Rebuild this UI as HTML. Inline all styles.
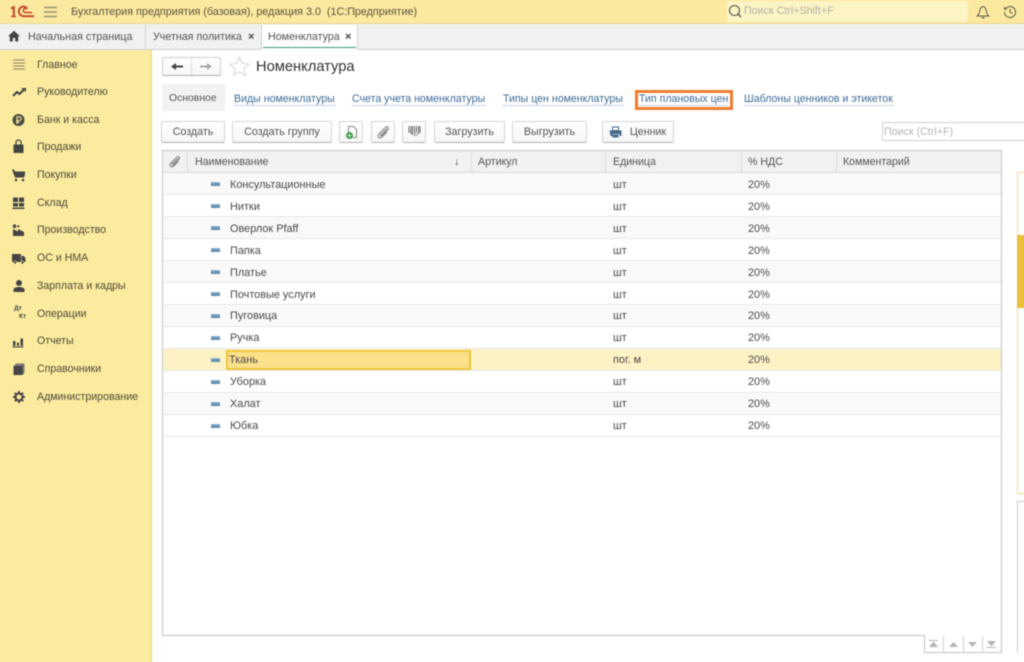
<!DOCTYPE html>
<html lang="ru"><head><meta charset="utf-8"><title>Номенклатура</title>
<style>
*{box-sizing:border-box}
html,body{margin:0;padding:0;width:1024px;height:662px;overflow:hidden;background:#fff}
body{font-family:"Liberation Sans",Arial,sans-serif;font-size:10.7px;color:#4a4a4a;position:relative}
.t{position:absolute;white-space:nowrap;line-height:14px}
#wrap{position:absolute;left:0;top:0;width:1024px;height:662px;filter:blur(.4px)}
.btn{position:absolute;top:121px;height:22px;background:linear-gradient(#fff,#f6f6f6);border:1px solid #d6d6d6;border-bottom-color:#b5b5b5;border-radius:2px;text-align:center;line-height:21px;color:#555;white-space:nowrap}
.link{position:absolute;top:93px;line-height:12px;color:#3f6c99;white-space:nowrap;border-bottom:1px dotted #8fabc7;height:13px}
.m{position:absolute;left:37px;color:#4d4a3a;line-height:14px;white-space:nowrap;font-size:10.6px}
.ic{position:absolute;left:10px;width:16px;height:16px}
.row{position:absolute;left:163px;width:838px;height:22px;border-bottom:1px solid #e8e8e8}
.row.g{background:#f9f9f8}
.row .c{position:absolute;top:5px;line-height:14px;white-space:nowrap;color:#4a4a4a;font-size:10.9px}
.row .d{position:absolute;left:48px;top:9px;width:9px;height:4px;background:#6d97b8;border-top:1px solid #8fb2cc;border-bottom:1px solid #5d86a8}
.hd{position:absolute;top:152px;height:21px;line-height:20px;color:#555;white-space:nowrap;font-size:10.6px}
.sep{position:absolute;top:152px;width:1px;height:21px;background:#dcdcdc}
</style></head><body><div id="wrap">

<!-- top bar -->
<div style="position:absolute;left:-6px;top:-6px;width:1036px;height:30px;background:#fbe99f;border-bottom:1px solid #e8d68c"></div>
<svg style="position:absolute;left:10px;top:5px" width="25" height="14" viewBox="0 0 25 14"><g fill="none" stroke="#c5432b"><path d="M1 3.500 3.800 2.200V11.500" stroke-width="2"/><path d="M1 11.500H6" stroke-width="1.400"/><path d="M17 2.800C15.500 1.500 13 1.200 11.200 2.200 8.800 3.500 8.200 6.500 9.300 8.600c.9 1.800 2.900 2.600 4.900 2.600H24" stroke-width="1.900"/><path d="M22 7.500H15.500c-1.300 0-2.200-.8-2.200-2 0-1.300 1-2.100 2.400-2 .7 0 1.200.2 1.600.6" stroke-width="1.500"/></g></svg>
<svg style="position:absolute;left:44px;top:6px" width="13" height="12" viewBox="0 0 13 12"><path d="M0 1.500h13M0 6h13M0 10.500h13" stroke="#9a9276" stroke-width="1.400"/></svg>
<div class="t" style="left:71px;top:5px;color:#5a553f;font-size:10.75px">Бухгалтерия предприятия (базовая), редакция 3.0&nbsp; (1С:Предприятие)</div>
<div style="position:absolute;left:727px;top:1px;width:241px;height:21px;background:#fdf4c6;border-radius:2px"></div>
<svg style="position:absolute;left:728px;top:4px" width="15" height="15" viewBox="0 0 15 15"><circle cx="6.500" cy="6.500" r="5" fill="none" stroke="#555" stroke-width="1.100"/><path d="M10 10l3 3" stroke="#555" stroke-width="1.400"/></svg>
<div class="t" style="left:744px;top:4px;color:#b4b0a0">Поиск Ctrl+Shift+F</div>
<svg style="position:absolute;left:976px;top:5px" width="14" height="14" viewBox="0 0 14 14"><path d="M7 1.500C4.800 2 4 3.500 3.800 6c-.2 2.500-1.700 4-2.500 5h11.400c-.8-1-2.300-2.500-2.500-5C10 3.500 9.200 2 7 1.500z" fill="none" stroke="#5a5a50" stroke-width="1"/><path d="M5.500 12.800h3" stroke="#5a5a50" stroke-width="1.200"/></svg>
<svg style="position:absolute;left:1003px;top:5px" width="14" height="14" viewBox="0 0 14 14"><path d="M2.400 4A5.500 5.500 0 1 1 1.500 7" fill="none" stroke="#5a5a50" stroke-width="1"/><path d="M.8 1.800l.6 3.200 3-.8z" fill="#5a5a50"/><path d="M7 3.800V7l2.300 1.600" fill="none" stroke="#5a5a50" stroke-width="1"/></svg>

<!-- tabs -->
<div style="position:absolute;left:-6px;top:24px;width:1036px;height:26px;background:#f1f1f1;border-bottom:1px solid #cfcfcf"></div>
<svg style="position:absolute;left:8px;top:30px" width="12" height="12" viewBox="0 0 12 12"><path d="M6 .8 0 6.300h1.800V11.500h3V8h2.400v3.500h3V6.300H12z" fill="#444"/></svg>
<div class="t" style="left:28px;top:30px;color:#555;font-size:10.8px">Начальная страница</div>
<div style="position:absolute;left:145px;top:25px;width:1px;height:24px;background:#d2d2d2"></div>
<div class="t" style="left:153px;top:30px;color:#555">Учетная политика</div>
<div class="t" style="left:248px;top:30px;color:#444;font-weight:bold;font-size:11px">×</div>
<div style="position:absolute;left:261px;top:25px;width:97px;height:25px;background:#fff;border-left:1px solid #d2d2d2;border-right:1px solid #d2d2d2"></div>
<div style="position:absolute;left:263px;top:47px;width:93px;height:1px;background:#2f9a77"></div>
<div class="t" style="left:268px;top:30px;color:#555">Номенклатура</div>
<div class="t" style="left:345px;top:30px;color:#444;font-weight:bold;font-size:11px">×</div>

<!-- sidebar -->
<div style="position:absolute;left:-6px;top:50px;width:158px;height:620px;background:#fbeb9e;border-right:1px solid #e3d38c"></div>
<svg class="ic" style="top:57px" viewBox="0 0 16 16"><path d="M3 3h12M3 6h12M3 9h12M3 12h12" stroke="#8a8468" stroke-width="1.100"/></svg>
<div class="m" style="top:58px">Главное</div>
<svg class="ic" style="top:84px" viewBox="0 0 16 16"><path d="M3 12l4-4 2.500 2L14 5.500" fill="none" stroke="#444" stroke-width="2"/><path d="M11 4h5v4z" fill="#444"/></svg>
<div class="m" style="top:85px">Руководителю</div>
<svg class="ic" style="top:112px" viewBox="0 0 16 16"><circle cx="8.500" cy="8" r="6" fill="#4a4a44"/><path d="M7 12V4.800h2.300a1.800 1.800 0 0 1 0 3.700H6M6 10.300h3.500" fill="none" stroke="#fbeb9e" stroke-width="1.100"/></svg>
<div class="m" style="top:113px">Банк и касса</div>
<svg class="ic" style="top:139px" viewBox="0 0 16 16"><path d="M3.500 5.500h10v8.500h-10z" fill="#444"/><path d="M6 7V3.500a2.500 2.500 0 0 1 5 0V7" fill="none" stroke="#444" stroke-width="1.300"/></svg>
<div class="m" style="top:140px">Продажи</div>
<svg class="ic" style="top:167px" viewBox="0 0 16 16"><path d="M2 2.500h2l1 2h10v3l-1 3H5z" fill="#444"/><circle cx="6" cy="13" r="1.300" fill="#444"/><circle cx="13" cy="13" r="1.300" fill="#444"/></svg>
<div class="m" style="top:168px">Покупки</div>
<svg class="ic" style="top:195px" viewBox="0 0 16 16"><path d="M3 2.500h5v4.500H3zM9 2.500h5v4.500H9zM3 8h5v3.500H3zM9 8h5v3.500H9zM2.500 12.500h12V14h-12z" fill="#444"/></svg>
<div class="m" style="top:196px">Склад</div>
<svg class="ic" style="top:222px" viewBox="0 0 16 16"><path d="M3 14V7l5 2.500V7l6 3v4zM3 2.500h3V6H3zM7 3.500h2.500V5H7z" fill="#444"/></svg>
<div class="m" style="top:223px">Производство</div>
<svg class="ic" style="top:250px" viewBox="0 0 16 16"><path d="M2 4h9v8H2zM11.500 6H14l1.500 2.500V12h-4z" fill="#444"/><circle cx="5" cy="12.500" r="1.500" fill="#444" stroke="#fbeb9e" stroke-width=".6"/><circle cx="12.500" cy="12.500" r="1.500" fill="#444" stroke="#fbeb9e" stroke-width=".6"/></svg>
<div class="m" style="top:251px">ОС и НМА</div>
<svg class="ic" style="top:278px" viewBox="0 0 16 16"><circle cx="9" cy="5" r="3" fill="#444"/><path d="M3.500 14v-2.500c0-1.500 2.500-2.500 5.500-2.500s5.500 1 5.500 2.500V14z" fill="#444"/></svg>
<div class="m" style="top:279px">Зарплата и кадры</div>
<div class="t" style="left:14px;top:305px;font-size:6.500px;line-height:8px;color:#444;font-weight:bold">Дт</div>
<div class="t" style="left:19px;top:313px;font-size:6.500px;line-height:8px;color:#444;font-weight:bold">Кт</div>
<div class="m" style="top:307px">Операции</div>
<svg class="ic" style="top:333px" viewBox="0 0 16 16"><path d="M3 8h2.500v5H3zM7 9.500h2v3.500H7zM10.500 5.500h2.500V13h-2.500zM2.500 13.500h11v1h-11z" fill="#444"/></svg>
<div class="m" style="top:334px">Отчеты</div>
<svg class="ic" style="top:361px" viewBox="0 0 16 16"><path d="M3.500 5 6 3v-.5h8.500V12l-2 2H3.500z" fill="#777"/><path d="M3.500 5h9v9h-9z" fill="#444"/></svg>
<div class="m" style="top:362px">Справочники</div>
<svg class="ic" style="top:389px" viewBox="0 0 16 16"><circle cx="9" cy="8" r="3.500" fill="none" stroke="#444" stroke-width="2"/><path d="M9 2v2.500M9 11.500V14M3 8h2.500M12.500 8H15M4.800 3.800l1.800 1.800M11.400 10.400l1.800 1.800M4.800 12.200l1.800-1.800M11.400 5.600l1.800-1.800" stroke="#444" stroke-width="2"/></svg>
<div class="m" style="top:390px">Администрирование</div>

<!-- nav -->
<div style="position:absolute;left:162px;top:57px;width:59px;height:19px;background:linear-gradient(#fff,#f7f7f7);border:1px solid #cfcfcf;border-bottom-color:#aaa;border-radius:2px"></div>
<div style="position:absolute;left:191px;top:58px;width:1px;height:17px;background:#dcdcdc"></div>
<svg style="position:absolute;left:171px;top:61px" width="13" height="11" viewBox="0 0 13 11"><path d="M1 5.500h11" stroke="#444" stroke-width="2"/><path d="M0 5.500 5 2v7z" fill="#444"/></svg>
<svg style="position:absolute;left:199px;top:61px" width="13" height="11" viewBox="0 0 13 11"><path d="M1 5.500h10" stroke="#aaa" stroke-width="2"/><path d="M13 5.500 8 2v7z" fill="#aaa"/></svg>
<svg style="position:absolute;left:229px;top:56px" width="21" height="20" viewBox="0 0 21 20"><path d="M10.500 1l2.800 6.500 6.700.6-5.100 4.500 1.500 6.700-5.900-3.500-5.900 3.500 1.500-6.700L1 8.100l6.700-.6z" fill="#fff" stroke="#d6d6d6"/></svg>
<div class="t" style="left:256px;top:58px;font-size:14.700px;line-height:18px;color:#333">Номенклатура</div>

<!-- form tabs -->
<div style="position:absolute;left:162px;top:84px;width:63px;height:27px;background:#f2f2f2;border-radius:2px"></div>
<div class="t" style="left:169px;top:92px;color:#555;font-size:10.4px">Основное</div>
<div class="link" style="left:234px;font-size:10.6px">Виды номенклатуры</div>
<div class="link" style="left:352px;font-size:10.6px">Счета учета номенклатуры</div>
<div class="link" style="left:503px;font-size:10.6px">Типы цен номенклатуры</div>
<div class="link" style="left:639px;font-size:10.6px">Тип плановых цен</div>
<div style="position:absolute;left:635px;top:90px;width:98px;height:20px;border:3px solid #ee7d2f"></div>
<div class="link" style="left:744px;font-size:10.6px">Шаблоны ценников и этикеток</div>

<!-- toolbar -->
<div class="btn" style="left:161px;width:64px">Создать</div>
<div class="btn" style="left:232px;width:100px">Создать группу</div>
<div class="btn" style="left:339px;width:24px"></div>
<svg style="position:absolute;left:345px;top:125px" width="13" height="15" viewBox="0 0 13 15"><path d="M3.500 1.500h5l3 3v8h-8z" fill="#fff" stroke="#888"/><circle cx="4.500" cy="10.500" r="3.500" fill="#3d9a4b"/><path d="M2.500 10.500h4M4.500 8.500v4" stroke="#bfe6c5"/></svg>
<div class="btn" style="left:371px;width:24px"></div>
<svg style="position:absolute;left:376px;top:125px" width="14" height="14" viewBox="0 0 14 14"><path d="M11 3.500 5 9.500c-1 1-.2 2 .8 1.200l6-6c1.700-1.800-.6-4-2.400-2.300L3 8.800c-2.500 2.500.7 5.500 3.200 3.200L11 7" fill="none" stroke="#888" stroke-width="1.100"/></svg>
<div class="btn" style="left:402px;width:24px"></div>
<svg style="position:absolute;left:408px;top:125px" width="13" height="13" viewBox="0 0 13 13"><path d="M1 1v7M3 1v8M4.500 1v9M6.500 1v10M8.500 1v8M10.500 1v8M12 1v7" stroke="#666" stroke-width="1"/><circle cx="8.500" cy="9" r="2.200" fill="#c9ccd2"/></svg>
<div class="btn" style="left:434px;width:71px">Загрузить</div>
<div class="btn" style="left:512px;width:75px">Выгрузить</div>
<div class="btn" style="left:602px;width:72px;padding-left:20px">Ценник</div>
<svg style="position:absolute;left:609px;top:126px" width="13" height="12" viewBox="0 0 13 12"><path d="M3.500 1h6v3.500h-6z" fill="#fff" stroke="#46688a"/><path d="M.5 4.500h12V10h-2V8h-7v2h-2z" fill="#46688a"/><path d="M3.500 8.500h6v3h-6z" fill="#46688a"/></svg>
<div style="position:absolute;left:882px;top:122px;width:150px;height:19px;background:#fff;border:1px solid #cfcfcf;border-right:0;border-radius:2px 0 0 2px"></div>
<div class="t" style="left:884px;top:125px;color:#b5b5b5">Поиск (Ctrl+F)</div>

<!-- table -->
<div style="position:absolute;left:162px;top:150px;width:840px;height:486px;background:#fff;border:1px solid #c4c4c4"></div>
<div style="position:absolute;left:163px;top:151px;width:838px;height:22px;background:#f1f1f1;border-bottom:1px solid #dcdcdc"></div>
<div class="sep" style="left:187px"></div><div class="sep" style="left:471px"></div><div class="sep" style="left:605px"></div><div class="sep" style="left:741px"></div><div class="sep" style="left:836px"></div>
<svg style="position:absolute;left:168px;top:155px" width="13" height="13" viewBox="0 0 14 14"><path d="M11 3.500 5 9.500c-1 1-.2 2 .8 1.200l6-6c1.700-1.800-.6-4-2.400-2.300L3 8.800c-2.500 2.500.7 5.500 3.200 3.200L11 7" fill="none" stroke="#888" stroke-width="1.200"/></svg>
<div class="hd" style="left:195px">Наименование</div>
<div class="hd" style="left:454px;color:#444">↓</div>
<div class="hd" style="left:478px">Артикул</div>
<div class="hd" style="left:613px">Единица</div>
<div class="hd" style="left:748px">% НДС</div>
<div class="hd" style="left:843px">Комментарий</div>

<div class="row g" style="top:173px"><i class="d"></i><span class="c" style="left:67px">Консультационные</span><span class="c" style="left:450px">шт</span><span class="c" style="left:585px">20%</span></div>
<div class="row" style="top:195px"><i class="d"></i><span class="c" style="left:67px">Нитки</span><span class="c" style="left:450px">шт</span><span class="c" style="left:585px">20%</span></div>
<div class="row g" style="top:217px"><i class="d"></i><span class="c" style="left:67px">Оверлок Pfaff</span><span class="c" style="left:450px">шт</span><span class="c" style="left:585px">20%</span></div>
<div class="row" style="top:239px"><i class="d"></i><span class="c" style="left:67px">Папка</span><span class="c" style="left:450px">шт</span><span class="c" style="left:585px">20%</span></div>
<div class="row g" style="top:261px"><i class="d"></i><span class="c" style="left:67px">Платье</span><span class="c" style="left:450px">шт</span><span class="c" style="left:585px">20%</span></div>
<div class="row" style="top:283px"><i class="d"></i><span class="c" style="left:67px">Почтовые услуги</span><span class="c" style="left:450px">шт</span><span class="c" style="left:585px">20%</span></div>
<div class="row g" style="top:305px"><i class="d"></i><span class="c" style="left:67px;top:4px">Пуговица</span><span class="c" style="left:450px;top:4px">шт</span><span class="c" style="left:585px;top:4px">20%</span></div>
<div class="row" style="top:327px"><i class="d"></i><span class="c" style="left:67px;top:4px">Ручка</span><span class="c" style="left:450px;top:4px">шт</span><span class="c" style="left:585px;top:4px">20%</span></div>
<div class="row" style="top:349px;height:22px;background:#fdf2c4"><div style="position:absolute;left:63px;top:1px;width:245px;height:20px;background:#fce08c;border:2px solid #f0c63c"></div><i class="d"></i><span class="c" style="left:66px;top:4px">Ткань</span><span class="c" style="left:450px;top:4px">пог. м</span><span class="c" style="left:585px;top:4px">20%</span></div>
<div class="row" style="top:371px"><i class="d"></i><span class="c" style="left:67px;top:4px">Уборка</span><span class="c" style="left:450px;top:4px">шт</span><span class="c" style="left:585px;top:4px">20%</span></div>
<div class="row g" style="top:393px"><i class="d"></i><span class="c" style="left:67px;top:4px">Халат</span><span class="c" style="left:450px;top:4px">шт</span><span class="c" style="left:585px;top:4px">20%</span></div>
<div class="row" style="top:415px"><i class="d"></i><span class="c" style="left:67px;top:4px">Юбка</span><span class="c" style="left:450px;top:4px">шт</span><span class="c" style="left:585px;top:4px">20%</span></div>

<!-- pager -->
<div style="position:absolute;left:924px;top:635px;width:78px;height:18px;background:#fff;border:1px solid #c4c4c4;border-top:0"></div>
<div style="position:absolute;left:943px;top:636px;width:1px;height:17px;background:#cfcfcf"></div>
<div style="position:absolute;left:963px;top:636px;width:1px;height:17px;background:#cfcfcf"></div>
<div style="position:absolute;left:982px;top:636px;width:1px;height:17px;background:#cfcfcf"></div>
<svg style="position:absolute;left:924px;top:636px" width="78" height="17" viewBox="0 0 78 17"><path d="M5 4h9v1H5zM9.500 5.500 14 11H5zM25 11 29.500 6 34 11zM44 6 48.500 11 53 6zM63 5h9L67.500 10.500zM63 11h9v1h-9z" fill="#b5b5b5"/></svg>

<!-- right panels -->
<div style="position:absolute;left:1017px;top:172px;width:15px;height:322px;background:#fff;border:1px solid #f1df96;border-right:0"></div>
<div style="position:absolute;left:1017px;top:235px;width:15px;height:73px;background:#eabf3c"></div>
<div style="position:absolute;left:1017px;top:501px;width:15px;height:152px;background:#fff;border-left:1px solid #cfcfc8;border-top:1px solid #cfcfc8"></div>

</div></body></html>
